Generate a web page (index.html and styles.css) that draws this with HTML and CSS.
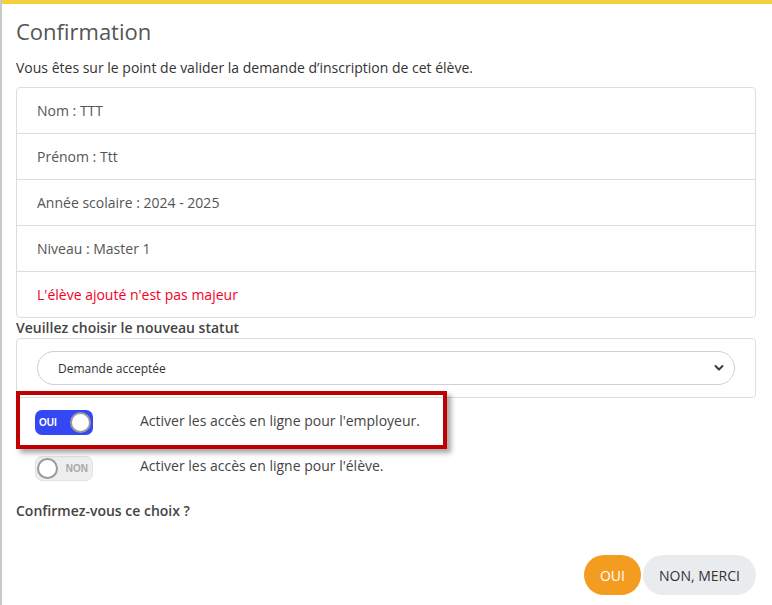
FILE: index.html
```html
<!DOCTYPE html>
<html lang="fr">
<head>
<meta charset="utf-8">
<link rel="stylesheet" href="styles.css">
<title>Confirmation</title>
</head>
<body>
<div class="modal">
  <div class="topbar"></div>
  <div class="content">
    <h1 class="title">Confirmation</h1>
    <p class="intro">Vous êtes sur le point de valider la demande d’inscription de cet élève.</p>
    <ul class="list">
      <li>Nom : TTT</li>
      <li>Prénom : Ttt</li>
      <li>Année scolaire : 2024 - 2025</li>
      <li>Niveau : Master 1</li>
      <li class="warn">L'élève ajouté n'est pas majeur</li>
    </ul>
    <div class="label">Veuillez choisir le nouveau statut</div>
    <div class="panel">
      <div class="select">
        <span>Demande acceptée</span>
        <svg class="chev" width="10" height="8" viewBox="0 0 10 8"><path d="M1.5 2 L5 5.5 L8.5 2" fill="none" stroke="#343a40" stroke-width="2" stroke-linecap="round" stroke-linejoin="round"/></svg>
      </div>
    </div>
    <div class="toggles">
      <div class="row">
        <span class="switch on"><span class="lbl">OUI</span><span class="knob"></span></span>
        <span class="rtext">Activer les accès en ligne pour l'employeur.</span>
      </div>
      <div class="row">
        <span class="switch off"><span class="knob"></span><span class="lbl">NON</span></span>
        <span class="rtext">Activer les accès en ligne pour l'élève.</span>
      </div>
      <div class="highlight"></div>
    </div>
    <div class="label confirm">Confirmez-vous ce choix ?</div>
    <div class="actions">
      <button class="btn yes">OUI</button>
      <button class="btn no">NON, MERCI</button>
    </div>
  </div>
</div>
</body>
</html>
```
FILE: styles.css
```css
html, body {
  margin: 0;
  padding: 0;
}
body {
  background: #c9c9c9;
  font-family: "Open Sans", "Noto Sans", sans-serif;
  height: 605px;
  overflow: hidden;
}
.modal {
  margin-left: 2px;
  background: #fff;
  height: 605px;
}
.topbar {
  height: 4px;
  background: #f4d03f;
}
.content {
  padding: 0 16px 0 14px;
}
.title {
  margin: 0;
  padding-top: 12px;
  font-size: 22px;
  line-height: 30px;
  font-weight: 400;
  color: #555;
}
.intro {
  margin: 12px 0 0;
  font-size: 14px;
  line-height: 20px;
  color: #333;
}
.list {
  list-style: none;
  margin: 9px 0 0;
  padding: 0;
  border: 1px solid #ddd;
  border-radius: 4px;
}
.list li {
  padding: 13px 20px 12px;
  font-size: 14px;
  line-height: 20px;
  color: #555;
  border-top: 1px solid #ddd;
}
.list li:first-child {
  border-top: 0;
}
.list li.warn {
  color: #f5001f;
}
.label {
  font-size: 14px;
  line-height: 20px;
  font-weight: 600;
  color: #444;
}
.panel {
  border: 1px solid #ddd;
  border-radius: 4px;
  padding: 12px 20px;
}
.select {
  height: 34px;
  box-sizing: border-box;
  border: 1px solid #ccd1d9;
  border-radius: 17px;
  display: flex;
  align-items: center;
  justify-content: space-between;
  padding: 0 10px 0 20px;
  font-size: 12px;
  color: #333;
}
.chev {
  display: block;
}
.toggles {
  position: relative;
}
.row {
  height: 45px;
  display: flex;
  align-items: center;
}
.switch {
  margin-left: 19px;
  width: 58px;
  height: 25px;
  border-radius: 7px;
  box-sizing: border-box;
  display: flex;
  align-items: center;
  flex: none;
}
.switch.on {
  background: #3347f5;
  padding: 0 2px 0 4px;
  justify-content: space-between;
  margin-top: 3px;
}
.switch.off {
  background: #eeeeee;
  border: 1px solid #e2e2e2;
  padding: 0 4px 0 1px;
  justify-content: space-between;
  margin-top: 5px;
}
.lbl {
  font-family: "Liberation Sans", Arial, sans-serif;
  font-size: 10px;
  font-weight: 700;
}
.on .lbl {
  color: #fff;
}
.off .lbl {
  color: #a8a8a8;
}
.knob {
  width: 17px;
  height: 17px;
  border-radius: 50%;
  background: #fff;
  border: 2px solid #9a9a9a;
}
.rtext {
  margin-left: 47px;
  font-size: 14px;
  line-height: 20px;
  color: #444;
}
.highlight {
  position: absolute;
  left: 0;
  top: -7px;
  width: 431px;
  height: 58px;
  box-sizing: border-box;
  border: 4px solid #c00000;
  box-shadow: 4px 4px 5px rgba(0, 0, 0, 0.35);
  pointer-events: none;
}
.confirm {
  margin-top: 13px;
}
.actions {
  display: flex;
  justify-content: flex-end;
  gap: 2px;
  margin-top: 34px;
}
.btn {
  height: 40px;
  border: 0;
  border-radius: 20px;
  font-family: "Open Sans", "Noto Sans", sans-serif;
  font-size: 14px;
  text-transform: uppercase;
  cursor: pointer;
}
.btn.yes {
  width: 57px;
  background: #f39c1f;
  color: #fff;
}
.btn.no {
  width: 113px;
  background: #e9ecef;
  color: #333;
}
```
